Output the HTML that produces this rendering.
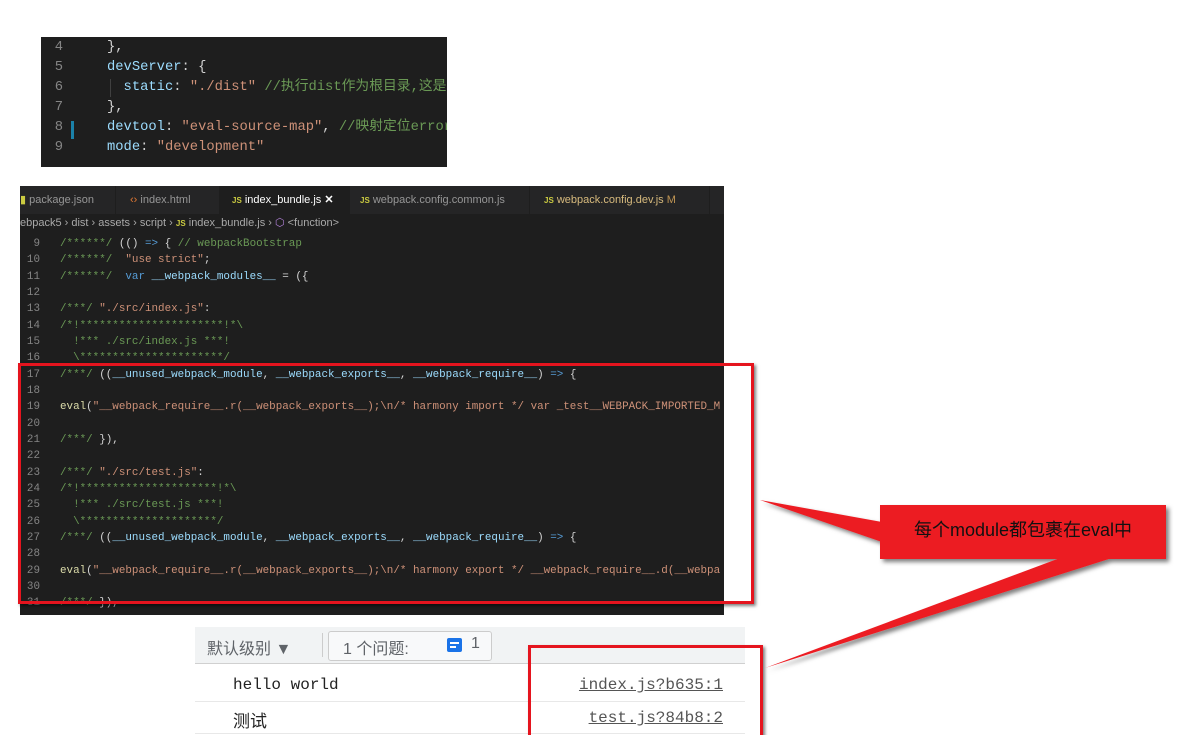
<!DOCTYPE html>
<html><head><meta charset="utf-8"><style>
html,body{margin:0;width:1198px;height:735px;overflow:hidden}
body{background:#fff;position:relative;font-family:"Liberation Sans","Noto Sans CJK SC",sans-serif}
.abs{position:absolute}
.top{left:41px;top:37px;width:406px;height:130px;background:#1e1e1e;font-family:"Liberation Mono","Noto Sans CJK SC",monospace;font-size:13.8px;overflow:hidden}
.top .l{position:absolute;left:0;height:20px;line-height:20px;white-space:pre}
.top .n{position:absolute;left:0;width:22px;text-align:right;color:#858585}
.top .c{position:absolute;left:66px}
.k{color:#9cdcfe}.s{color:#ce9178}.cm{color:#6a9955}.p{color:#d4d4d4}.b{color:#569cd6}.y{color:#dcdcaa}
.ed{left:20px;top:186px;width:704px;height:429px;background:#1e1e1e;overflow:hidden}
.tabs{position:absolute;left:0;top:0;width:704px;height:28px;background:#252526;font-size:11px;color:#969696}
.tab{position:absolute;top:0;height:28px;line-height:28px;border-right:1px solid #1e1e1e;padding-left:8px;box-sizing:border-box}
.bc{position:absolute;top:30px;left:0;font-size:11px;color:#a9a9a9;white-space:pre}
.code{font-family:"Liberation Mono",monospace;font-size:10.9px}
.code .l{position:absolute;left:0;height:16px;line-height:16px;white-space:pre}
.code .n{position:absolute;left:0;width:20px;text-align:right;color:#858585}
.code .c{position:absolute;left:40px}
.con{left:195px;top:627px;width:550px;height:108px;background:#fff}
</style></head><body>
<div class="abs top">
<div class="l" style="top:1px"><span class="n">4</span><span class="c p">},</span></div>
<div class="l" style="top:21px"><span class="n">5</span><span class="c"><span class="k">devServer</span><span class="p">: {</span></span></div>
<div class="l" style="top:41px"><span class="n">6</span><span class="c"><span class="k">  static</span><span class="p">: </span><span class="s">"./dist"</span> <span class="cm">//执行dist作为根目录,这是</span></span></div>
<div class="l" style="top:61px"><span class="n">7</span><span class="c p">},</span></div>
<div class="l" style="top:81px"><span class="n">8</span><span class="c"><span class="k">devtool</span><span class="p">: </span><span class="s">"eval-source-map"</span><span class="p">, </span><span class="cm">//映射定位error</span></span></div>
<div class="l" style="top:101px"><span class="n">9</span><span class="c"><span class="k">mode</span><span class="p">: </span><span class="s">"development"</span></span></div>
<div class="abs" style="left:30px;top:84px;width:3px;height:18px;background:#1b81a8"></div>
<div class="abs" style="left:69px;top:42px;width:1px;height:18px;background:#404040"></div>
</div>

<div class="abs ed">
<div class="tabs">
<div class="tab" style="left:-8px;width:104px"><span style="color:#cbcb41">▮</span> package.json</div>
<div class="tab" style="left:96px;width:104px;padding-left:14px"><span style="color:#e37933">‹›</span> index.html</div>
<div class="tab" style="left:200px;width:130px;background:#1e1e1e;color:#fff;padding-left:12px"><span style="color:#cbcb41;font-size:8px;font-weight:bold">JS</span> index_bundle.js <b>✕</b></div>
<div class="tab" style="left:330px;width:180px;padding-left:10px"><span style="color:#cbcb41;font-size:8px;font-weight:bold">JS</span> webpack.config.common.js</div>
<div class="tab" style="left:510px;width:180px;color:#d7ba7d;padding-left:14px"><span style="color:#cbcb41;font-size:8px;font-weight:bold">JS</span> webpack.config.dev.js <span style="color:#c09553">M</span></div>
</div>
<div class="bc">ebpack5 › dist › assets › script › <span style="color:#cbcb41;font-size:8px;font-weight:bold">JS</span> index_bundle.js › <span style="color:#b180d7">⬡</span> &lt;function&gt;</div>
<div class="code">
<div class="l" style="top:50px"><span class="n">9</span><span class="c"><span class="cm">/******/</span> <span class="p">(() </span><span class="b">=&gt;</span><span class="p"> { </span><span class="cm">// webpackBootstrap</span></span></div>
<div class="l" style="top:66px"><span class="n">10</span><span class="c"><span class="cm">/******/</span>  <span class="s">"use strict"</span><span class="p">;</span></span></div>
<div class="l" style="top:83px"><span class="n">11</span><span class="c"><span class="cm">/******/</span>  <span class="b">var</span> <span class="k">__webpack_modules__</span><span class="p"> = ({</span></span></div>
<div class="l" style="top:99px"><span class="n">12</span></div>
<div class="l" style="top:115px"><span class="n">13</span><span class="c"><span class="cm">/***/</span> <span class="s">"./src/index.js"</span><span class="p">:</span></span></div>
<div class="l" style="top:132px"><span class="n">14</span><span class="c cm">/*!**********************!*\</span></div>
<div class="l" style="top:148px"><span class="n">15</span><span class="c cm">  !*** ./src/index.js ***!</span></div>
<div class="l" style="top:164px"><span class="n">16</span><span class="c cm">  \**********************/</span></div>
<div class="l" style="top:181px"><span class="n">17</span><span class="c"><span class="cm">/***/</span> <span class="p">((</span><span class="k">__unused_webpack_module</span><span class="p">, </span><span class="k">__webpack_exports__</span><span class="p">, </span><span class="k">__webpack_require__</span><span class="p">) </span><span class="b">=&gt;</span><span class="p"> {</span></span></div>
<div class="l" style="top:197px"><span class="n">18</span></div>
<div class="l" style="top:213px"><span class="n">19</span><span class="c"><span class="y">eval</span><span class="p">(</span><span class="s">"__webpack_require__.r(__webpack_exports__);\n/* harmony import */ var _test__WEBPACK_IMPORTED_M</span></span></div>
<div class="l" style="top:230px"><span class="n">20</span></div>
<div class="l" style="top:246px"><span class="n">21</span><span class="c"><span class="cm">/***/</span> <span class="p">}),</span></span></div>
<div class="l" style="top:262px"><span class="n">22</span></div>
<div class="l" style="top:279px"><span class="n">23</span><span class="c"><span class="cm">/***/</span> <span class="s">"./src/test.js"</span><span class="p">:</span></span></div>
<div class="l" style="top:295px"><span class="n">24</span><span class="c cm">/*!*********************!*\</span></div>
<div class="l" style="top:311px"><span class="n">25</span><span class="c cm">  !*** ./src/test.js ***!</span></div>
<div class="l" style="top:328px"><span class="n">26</span><span class="c cm">  \*********************/</span></div>
<div class="l" style="top:344px"><span class="n">27</span><span class="c"><span class="cm">/***/</span> <span class="p">((</span><span class="k">__unused_webpack_module</span><span class="p">, </span><span class="k">__webpack_exports__</span><span class="p">, </span><span class="k">__webpack_require__</span><span class="p">) </span><span class="b">=&gt;</span><span class="p"> {</span></span></div>
<div class="l" style="top:360px"><span class="n">28</span></div>
<div class="l" style="top:377px"><span class="n">29</span><span class="c"><span class="y">eval</span><span class="p">(</span><span class="s">"__webpack_require__.r(__webpack_exports__);\n/* harmony export */ __webpack_require__.d(__webpa</span></span></div>
<div class="l" style="top:393px"><span class="n">30</span></div>
<div class="l" style="top:409px"><span class="n">31</span><span class="c"><span class="cm">/***/</span> <span class="p">}),</span></span></div>
</div>
</div>

<div class="abs" style="left:18px;top:363px;width:730px;height:235px;border:3px solid #e5141e;box-shadow:2px 2px 3px rgba(0,0,0,.5)"></div>

<div class="abs con">
<div class="abs" style="left:0;top:0;width:550px;height:36px;background:#f1f3f4;border-bottom:1px solid #d0d0d0"></div>
<div class="abs" style="left:12px;top:8px;font-size:16px;color:#5f6368">默认级别 ▼</div>
<div class="abs" style="left:127px;top:6px;width:1px;height:24px;background:#ccc"></div>
<div class="abs" style="left:133px;top:4px;width:162px;height:28px;border:1px solid #ccc;border-radius:3px;background:#f8f9fa"></div>
<div class="abs" style="left:148px;top:8px;font-size:16px;color:#5f6368">1 个问题:</div>
<div class="abs" style="left:252px;top:11px;width:15px;height:14px;background:#1a73e8;border-radius:2px"></div>
<div class="abs" style="left:255px;top:15px;width:9px;height:2px;background:#fff"></div>
<div class="abs" style="left:255px;top:19px;width:6px;height:2px;background:#fff"></div>
<div class="abs" style="left:276px;top:8px;font-size:16px;color:#5f6368">1</div>
<div class="abs" style="left:38px;top:49px;font-family:'Liberation Mono',monospace;font-size:16px;color:#222">hello world</div>
<div class="abs" style="left:0;top:74px;width:550px;height:1px;background:#e8e8e8"></div>
<div class="abs" style="left:38px;top:80px;font-size:17px;color:#222">测试</div>
<div class="abs" style="left:0;top:106px;width:550px;height:1px;background:#e8e8e8"></div>
<div class="abs" style="right:22px;top:49px;font-family:'Liberation Mono',monospace;font-size:16px;color:#555;text-decoration:underline">index.js?b635:1</div>
<div class="abs" style="right:22px;top:82px;font-family:'Liberation Mono',monospace;font-size:16px;color:#555;text-decoration:underline">test.js?84b8:2</div>
</div>

<div class="abs" style="left:528px;top:645px;width:229px;height:100px;border:3px solid #e5141e;box-shadow:2px 2px 3px rgba(0,0,0,.5)"></div>

<svg class="abs" style="left:0;top:0" width="1198" height="735">
<defs><filter id="sh"><feDropShadow dx="3" dy="3" stdDeviation="2" flood-color="#000" flood-opacity=".5"/></filter></defs>
<g filter="url(#sh)" fill="#ec1c24">
<polygon points="760,500 882,522 882,542"/>
<polygon points="765,668 1060,558 1112,558"/>
<rect x="880" y="505" width="286" height="54"/>
</g>
</svg>
<div class="abs" style="left:880px;top:516px;width:286px;text-align:center;font-size:18px;color:#111">每个module都包裹在eval中</div>
</body></html>
